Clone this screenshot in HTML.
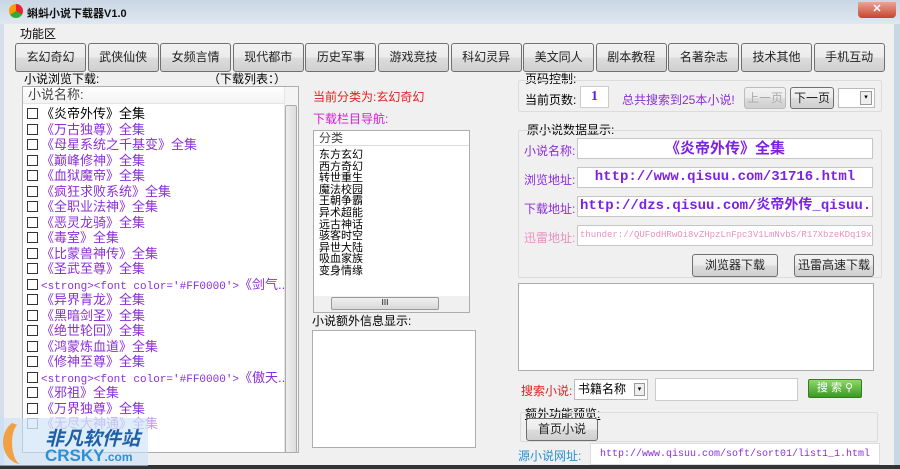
<!DOCTYPE html><html><head><meta charset="utf-8"><style>
*{margin:0;padding:0;box-sizing:border-box}
body{width:900px;height:469px;overflow:hidden;background:#f0f0f0;font-family:"Liberation Sans","Noto Sans CJK SC",sans-serif;font-size:12px;color:#000;position:relative}
.a{position:absolute;white-space:nowrap}
.btn{position:absolute;border:1px solid #707070;border-radius:3px;background:linear-gradient(#f2f2f2,#ebebeb 50%,#dddddd 51%,#cfcfcf);text-align:center;font-size:12px;color:#222}
.box{position:absolute;background:#fff;border:1px solid #abadb3}
.grp{position:absolute;border:1px solid #dcdcdc;border-radius:2px}
.cb{display:inline-block;width:11px;height:11px;border:1px solid #333;background:#fff;margin-right:3px;vertical-align:-1px}
.it{height:15.5px;line-height:15.5px;font-size:13px;color:#8b2fd8;padding-left:4px;white-space:nowrap;overflow:hidden}
.mono{font-family:"Liberation Mono","Noto Sans CJK SC",monospace;font-size:11px}
.nav div{line-height:11.6px;font-size:11px}
.lab{color:#8b2fd8;font-size:12px}
.inp{position:absolute;background:#fff;border:1px solid #c5c5c5;color:#7d1fe6;font-weight:bold;font-family:"Liberation Mono","Noto Sans CJK SC",monospace;text-align:center;overflow:hidden;white-space:nowrap}
</style></head><body>
<div class="a" style="left:0;top:0;width:900px;height:24px;background:linear-gradient(#c9d6e3,#dfe8f1)"></div>
<div class="a" style="left:9px;top:4px;width:14px;height:14px;border-radius:50%;background:conic-gradient(#e23 0 33%,#3a3 0 66%,#f90 0)"></div>
<div class="a" style="left:27px;top:5px;font-size:11px;font-weight:bold;color:#111">蝌蚪小说下载器V1.0</div>
<div class="a" style="left:858px;top:2px;width:38px;height:16px;border-radius:0 0 4px 4px;background:linear-gradient(#e8a595,#c8442b);color:#fff;font-weight:bold;text-align:center;line-height:15px;font-size:11px">✕</div>
<div class="a" style="left:0;top:24px;width:4px;height:445px;background:#d4dfea"></div>
<div class="a" style="left:894px;top:24px;width:6px;height:445px;background:#c9d7e5"></div>
<div class="a" style="left:0;top:465px;width:900px;height:4px;background:#333"></div>
<div class="a" style="left:20px;top:25px">功能区</div>
<div class="btn" style="left:15px;top:43px;width:71px;height:29px;line-height:27px">玄幻奇幻</div>
<div class="btn" style="left:87.6px;top:43px;width:71px;height:29px;line-height:27px">武侠仙侠</div>
<div class="btn" style="left:160.2px;top:43px;width:71px;height:29px;line-height:27px">女频言情</div>
<div class="btn" style="left:232.8px;top:43px;width:71px;height:29px;line-height:27px">现代都市</div>
<div class="btn" style="left:305.4px;top:43px;width:71px;height:29px;line-height:27px">历史军事</div>
<div class="btn" style="left:378px;top:43px;width:71px;height:29px;line-height:27px">游戏竞技</div>
<div class="btn" style="left:450.6px;top:43px;width:71px;height:29px;line-height:27px">科幻灵异</div>
<div class="btn" style="left:523.2px;top:43px;width:71px;height:29px;line-height:27px">美文同人</div>
<div class="btn" style="left:595.8px;top:43px;width:71px;height:29px;line-height:27px">剧本教程</div>
<div class="btn" style="left:668.4px;top:43px;width:71px;height:29px;line-height:27px">名著杂志</div>
<div class="btn" style="left:741px;top:43px;width:71px;height:29px;line-height:27px">技术其他</div>
<div class="btn" style="left:813.6px;top:43px;width:71px;height:29px;line-height:27px">手机互动</div>
<div class="a" style="left:24px;top:70px">小说浏览下载:</div>
<div class="a" style="left:208px;top:70px">（下载列表：）</div>
<div class="box" style="left:22px;top:86px;width:277px;height:367px;overflow:hidden">
<div style="height:17px;line-height:16px;padding-left:5px;font-size:13px;color:#444;border-bottom:1px solid #e5e5e5;background:linear-gradient(#fff,#f3f3f3)">小说名称:</div>
<div style="padding-top:2px">
<div class="it" style="color:#000"><span class="cb"></span>《炎帝外传》全集</div>
<div class="it"><span class="cb"></span>《万古独尊》全集</div>
<div class="it"><span class="cb"></span>《母星系统之千基变》全集</div>
<div class="it"><span class="cb"></span>《巅峰修神》全集</div>
<div class="it"><span class="cb"></span>《血狱魔帝》全集</div>
<div class="it"><span class="cb"></span>《疯狂求败系统》全集</div>
<div class="it"><span class="cb"></span>《全职业法神》全集</div>
<div class="it"><span class="cb"></span>《恶灵龙骑》全集</div>
<div class="it"><span class="cb"></span>《毒室》全集</div>
<div class="it"><span class="cb"></span>《比蒙兽神传》全集</div>
<div class="it"><span class="cb"></span>《圣武至尊》全集</div>
<div class="it"><span class="cb"></span><span class="mono">&lt;strong&gt;&lt;font color='#FF0000'&gt;</span>《剑气..</div>
<div class="it"><span class="cb"></span>《异界青龙》全集</div>
<div class="it"><span class="cb"></span>《黑暗剑圣》全集</div>
<div class="it"><span class="cb"></span>《绝世轮回》全集</div>
<div class="it"><span class="cb"></span>《鸿蒙炼血道》全集</div>
<div class="it"><span class="cb"></span>《修神至尊》全集</div>
<div class="it"><span class="cb"></span><span class="mono">&lt;strong&gt;&lt;font color='#FF0000'&gt;</span>《傲天..</div>
<div class="it"><span class="cb"></span>《邪祖》全集</div>
<div class="it"><span class="cb"></span>《万界独尊》全集</div>
<div class="it" style="opacity:.5"><span class="cb"></span>《无尽大神通》全集</div>
</div>
<div class="a" style="right:0;top:0;width:14px;height:367px;background:#f4f4f4;border-left:1px solid #e6e6e6"></div>
<div class="a" style="right:1px;top:18px;width:12px;height:348px;border:1px solid #aaa;border-radius:2px;background:linear-gradient(90deg,#eee,#ddd)"></div>
</div>
<div class="a" style="left:0;top:418px;width:148px;height:48px;background:rgba(200,225,245,.6)"></div>
<div class="a" style="left:3px;top:420px;width:36px;height:44px;border-radius:50%;border-left:9px solid #f2a044;border-top:3px solid transparent"></div>
<div class="a" style="left:45px;top:424px;font-size:19px;font-weight:bold;font-style:italic;color:#1f5fa8">非凡软件站</div>
<div class="a" style="left:45px;top:446px;font-size:17px;font-weight:bold;color:#2d8fd5">CRSKY<span style="font-size:12px">.com</span></div>
<div class="a" style="left:313px;top:88px;color:#e02020">当前分类为:玄幻奇幻</div>
<div class="a" style="left:313px;top:110px;color:#d020d0">下载栏目导航:</div>
<div class="box" style="left:313px;top:130px;width:157px;height:183px">
<div style="height:15px;line-height:14px;padding-left:5px;color:#444;border-bottom:1px solid #ddd">分类</div>
<div class="nav" style="padding-left:5px;padding-top:4px">
<div>东方玄幻</div><div>西方奇幻</div><div>转世重生</div><div>魔法校园</div><div>王朝争霸</div><div>异术超能</div><div>远古神话</div><div>骇客时空</div><div>异世大陆</div><div>吸血家族</div><div>变身情缘</div></div>
<div class="a" style="left:0;bottom:0;width:155px;height:16px;background:#f0f0f0"></div>
<div class="a" style="left:17px;bottom:2px;width:108px;height:13px;border:1px solid #999;border-radius:2px;background:linear-gradient(#f0f0f0,#d8d8d8);font-size:8px;text-align:center;line-height:10px">III</div>
</div>
<div class="a" style="left:312px;top:312px">小说额外信息显示:</div>
<div class="box" style="left:312px;top:330px;width:164px;height:118px"></div>
<div class="a" style="left:525px;top:70px">页码控制:</div>
<div class="grp" style="left:518px;top:80px;width:364px;height:32px"></div>
<div class="a" style="left:525px;top:91px">当前页数:</div>
<div class="a" style="left:580px;top:86px;width:29px;height:22px;background:#fff;border:1px solid #ccc;color:#6020e0;font-weight:bold;font-size:14px;text-align:center;line-height:20px;font-family:'Liberation Serif',serif">1</div>
<div class="a" style="left:622px;top:91px;color:#8b2fd8">总共搜索到25本小说!</div>
<div class="btn" style="left:744px;top:87px;width:42px;height:22px;line-height:20px;color:#aaa;border-color:#bbb">上一页</div>
<div class="btn" style="left:790px;top:87px;width:44px;height:22px;line-height:20px">下一页</div>
<div class="a" style="left:838px;top:88px;width:37px;height:20px;background:#fff;border:1px solid #bbb"><div style="position:absolute;right:2px;top:2px;width:12px;height:14px;border:1px solid #999;background:#eee;font-size:7px;text-align:center;line-height:12px">▾</div></div>
<div class="a" style="left:527px;top:121px">原小说数据显示:</div>
<div class="grp" style="left:518px;top:130px;width:364px;height:148px"></div>
<div class="a lab" style="left:524px;top:142px">小说名称:</div>
<div class="inp" style="left:577px;top:138px;width:296px;height:21px;font-size:15px;line-height:19px;font-family:'Liberation Sans','Noto Sans CJK SC',sans-serif">《炎帝外传》全集</div>
<div class="a lab" style="left:524px;top:171px">浏览地址:</div>
<div class="inp" style="left:577px;top:167px;width:296px;height:21px;font-size:14px;line-height:19px">http://www.qisuu.com/31716.html</div>
<div class="a lab" style="left:524px;top:200px">下载地址:</div>
<div class="inp" style="left:577px;top:196px;width:296px;height:21px;font-size:14px;line-height:19px;text-align:left;padding-left:2px">http://dzs.qisuu.com/炎帝外传_qisuu.</div>
<div class="a" style="left:524px;top:229px;color:#e890c0">迅雷地址:</div>
<div class="inp" style="left:577px;top:225px;width:296px;height:21px;font-size:9px;line-height:19px;font-weight:normal;color:#e890c0;text-align:left;padding-left:2px">thunder://QUFodHRwOi8vZHpzLnFpc3V1LmNvbS/R17XbzeKDq19x</div>
<div class="btn" style="left:692px;top:254px;width:86px;height:23px;line-height:21px">浏览器下载</div>
<div class="btn" style="left:794px;top:254px;width:80px;height:23px;line-height:21px">迅雷高速下载</div>
<div class="box" style="left:518px;top:283px;width:356px;height:88px"></div>
<div class="a" style="left:521px;top:382px;color:#e02020">搜索小说:</div>
<div class="a" style="left:574px;top:379px;width:74px;height:21px;background:#fff;border:1px solid #bbb;padding-left:3px;line-height:19px">书籍名称<div style="position:absolute;right:2px;top:3px;width:11px;height:13px;border:1px solid #999;background:#eee;font-size:7px;text-align:center;line-height:11px">▾</div></div>
<div class="box" style="left:655px;top:378px;width:143px;height:23px;border-color:#ccc"></div>
<div class="a" style="left:808px;top:379px;width:54px;height:19px;border:1px solid #3a7a20;border-radius:2px;background:linear-gradient(#8fd86a,#3a9a20);color:#fff;text-align:center;line-height:17px;font-size:11px">搜 索 ⚲</div>
<div class="a" style="left:525px;top:405px;text-decoration:underline">额外功能预览:</div>
<div class="grp" style="left:520px;top:412px;width:358px;height:30px"></div>
<div class="btn" style="left:526px;top:418px;width:72px;height:23px;line-height:21px">首页小说</div>
<div class="a" style="left:518px;top:447px;color:#2a90d0">源小说网址:</div>
<div class="a mono" style="left:590px;top:443px;width:290px;height:22px;background:#fff;border:1px solid #ddd;color:#8b2fd8;font-size:10px;text-align:center;line-height:21px">http://www.qisuu.com/soft/sort01/list1_1.html</div>
</body></html>
